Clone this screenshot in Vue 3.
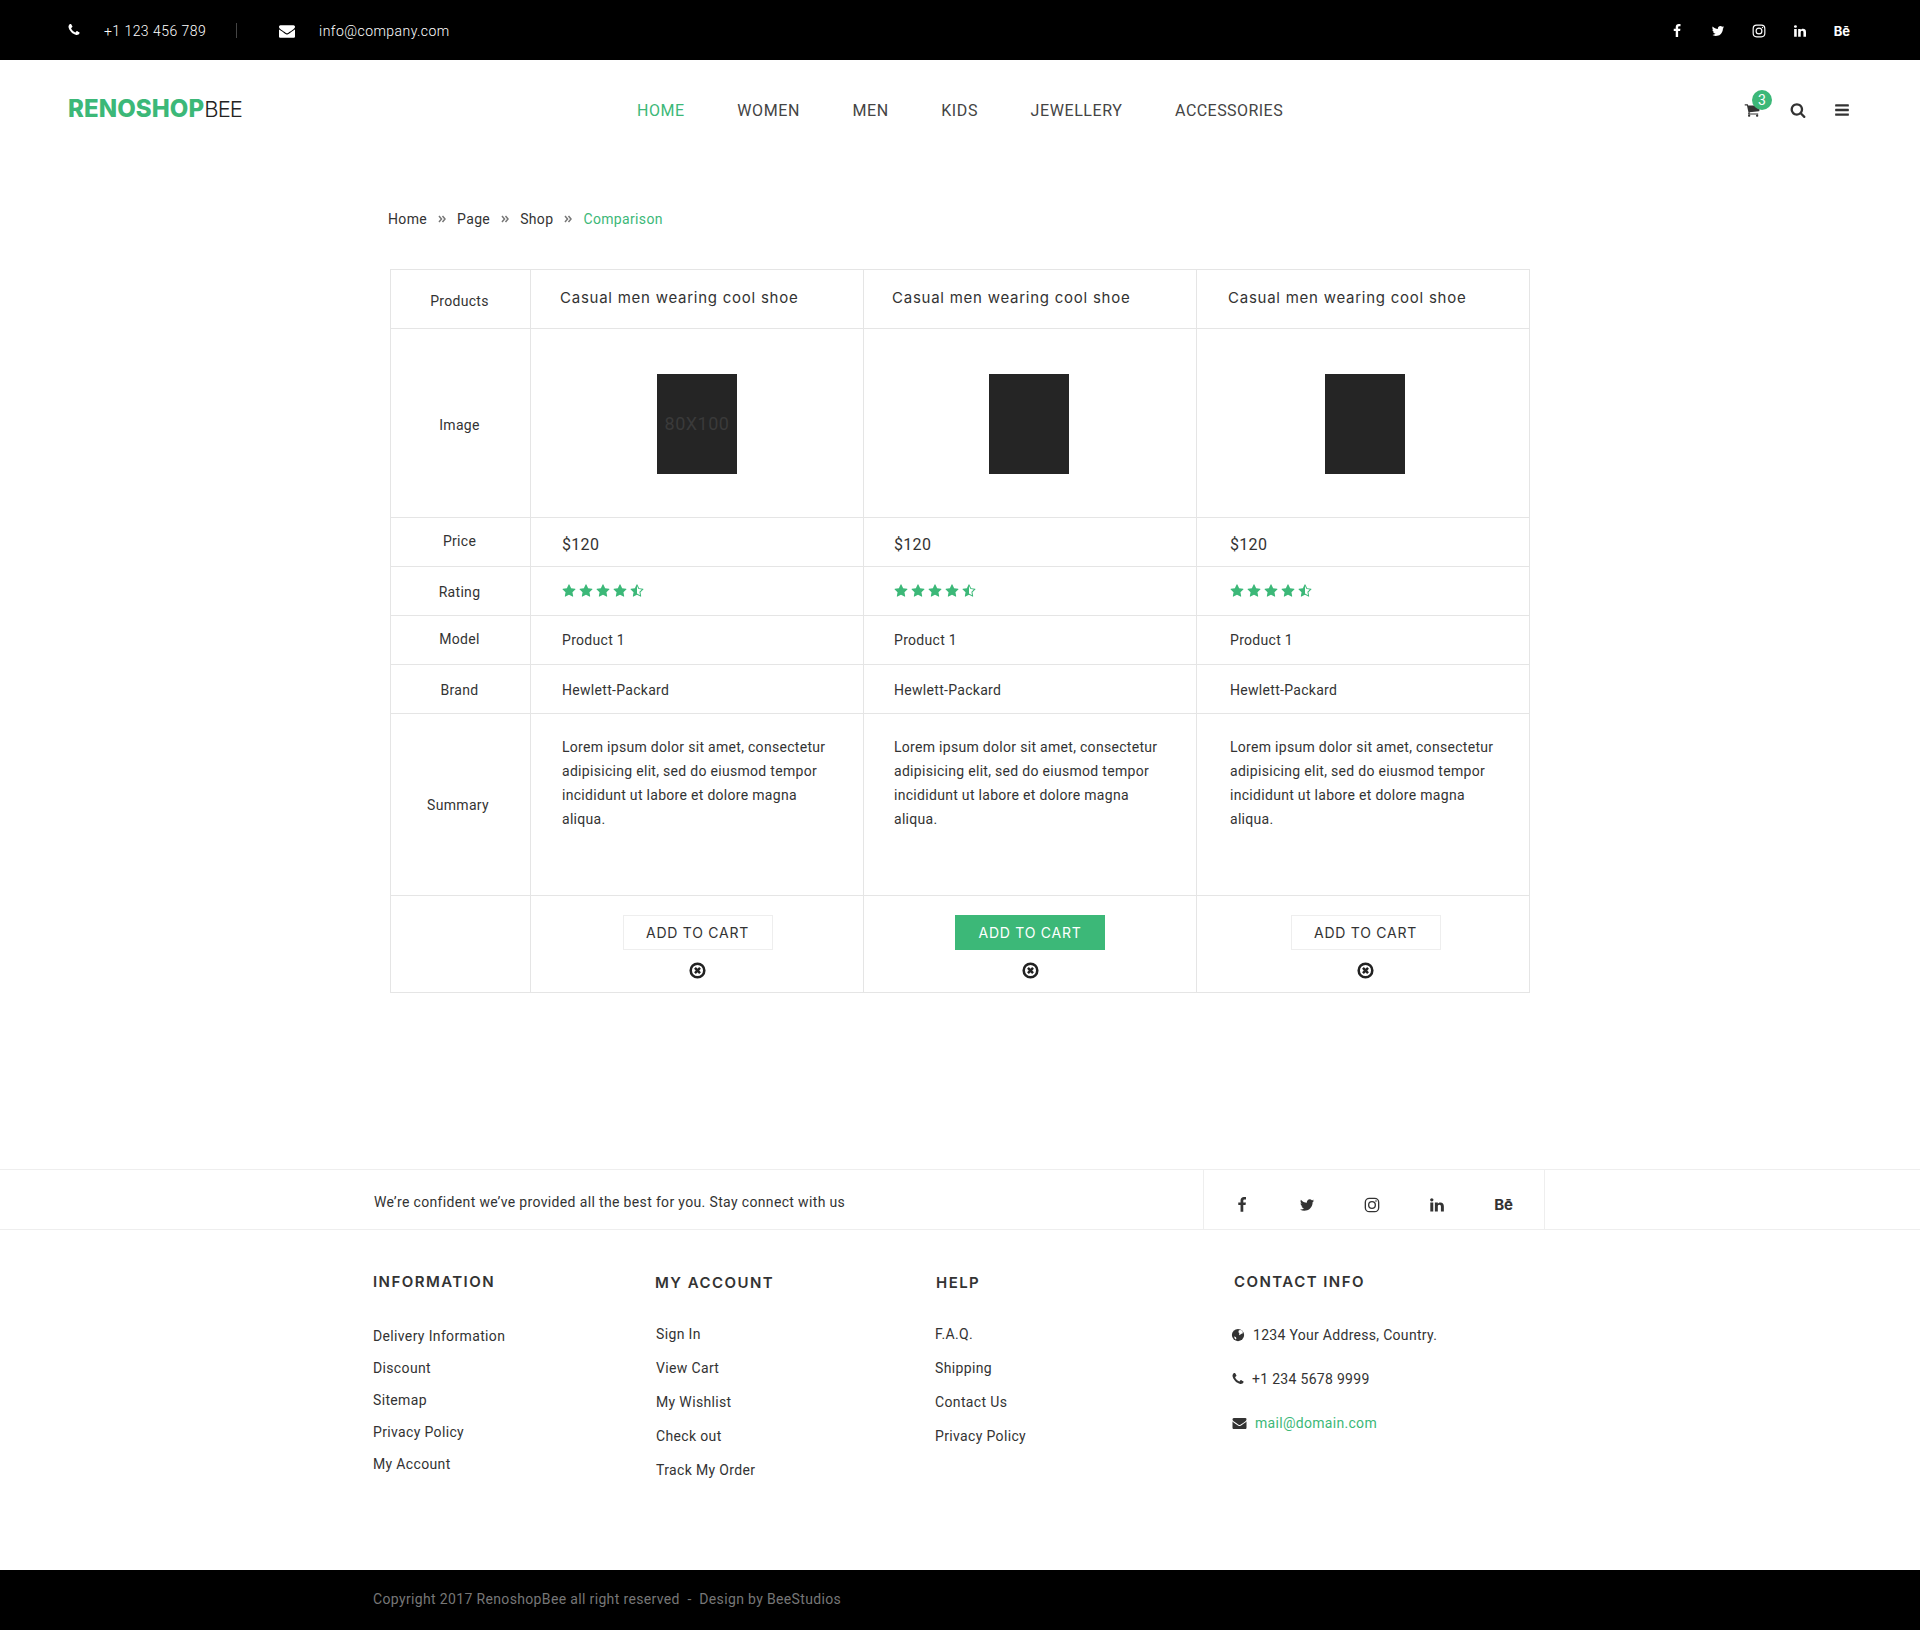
<template>
  <div class="page">
    <div class="topbar">
      <div class="top-left">
        <svg class="ic top-phone" viewBox="128 128 1536 1536"><path :d="icons.phone" /></svg>
        <span class="top-text">+1 123 456 789</span>
        <span class="top-sep"></span>
        <svg class="ic top-mail" viewBox="0 0 1792 1792"><path :d="icons.envelope" /></svg>
        <span class="top-text">info@company.com</span>
      </div>
      <div class="top-social">
        <svg class="ic" viewBox="0 0 1792 1792"><path :d="icons.facebook" /></svg>
        <svg class="ic" viewBox="0 0 1792 1792"><path :d="icons.twitter" /></svg>
        <svg class="ic insta" viewBox="0 0 24 24"><rect x="2" y="2" width="20" height="20" rx="6" /><circle cx="12" cy="12" r="5" /><circle class="dot" cx="18" cy="6" r="1.2" /></svg>
        <svg class="ic" viewBox="0 0 1792 1792"><path :d="icons.linkedin" /></svg>
        <span class="behance">Bē</span>
      </div>
    </div>

    <header class="nav">
      <div class="logo"><b>RENOSHOP</b><span>BEE</span></div>
      <nav class="menu">
        <a v-for="(m, i) in menu" :key="m" :class="{ active: i === 0 }">{{ m }}</a>
      </nav>
      <div class="nav-icons">
        <span class="cart">
          <svg class="ic" viewBox="0 0 1792 1792"><path :d="icons.cart" /></svg>
          <span class="badge">3</span>
        </span>
        <svg class="ic" viewBox="0 0 1792 1792"><path :d="icons.search" /></svg>
        <svg class="ic" viewBox="0 0 1792 1792"><path :d="icons.bars" /></svg>
      </div>
    </header>

    <div class="crumbs">
      <template v-for="(c, i) in crumbs" :key="c">
        <span :class="{ current: i === crumbs.length - 1 }">{{ c }}</span>
        <svg v-if="i < crumbs.length - 1" class="chev" viewBox="0 0 8 8"><path d="M1 1l2.5 3L1 7M4.5 1L7 4 4.5 7" /></svg>
      </template>
    </div>

    <table class="compare">
      <colgroup>
        <col class="c-label" /><col class="c-prod" /><col class="c-prod" /><col class="c-prod" />
      </colgroup>
      <tbody>
        <tr class="r-title">
          <th>Products</th>
          <td v-for="n in 3" :key="n"><h5>Casual men wearing cool shoe</h5></td>
        </tr>
        <tr class="r-image">
          <th>Image</th>
          <td v-for="n in 3" :key="n"><div class="thumb"><span v-if="n === 1">80X100</span></div></td>
        </tr>
        <tr class="r-small">
          <th class="up">Price</th>
          <td v-for="n in 3" :key="n"><span class="price">$120</span></td>
        </tr>
        <tr class="r-small">
          <th class="down">Rating</th>
          <td v-for="n in 3" :key="n">
            <div class="stars">
              <svg v-for="s in 4" :key="s" viewBox="0 0 1792 1792"><path :d="icons.star" /></svg>
              <svg viewBox="0 0 1792 1792"><path :d="icons.starHalf" /></svg>
            </div>
          </td>
        </tr>
        <tr class="r-small">
          <th class="up">Model</th>
          <td v-for="n in 3" :key="n">Product 1</td>
        </tr>
        <tr class="r-small r-brand">
          <th class="down">Brand</th>
          <td v-for="n in 3" :key="n">Hewlett-Packard</td>
        </tr>
        <tr class="r-summary">
          <th>Summary</th>
          <td v-for="n in 3" :key="n"><p>Lorem ipsum dolor sit amet, consectetur adipisicing elit, sed do eiusmod tempor incididunt ut labore et dolore magna aliqua.</p></td>
        </tr>
        <tr class="r-action">
          <th></th>
          <td v-for="n in 3" :key="n">
            <a class="btn" :class="{ filled: n === 2 }">ADD TO CART</a>
            <svg class="remove" viewBox="0 0 16 16"><circle cx="8" cy="8" r="6.4" /><path d="M5.6 5.6l4.8 4.8M10.4 5.6l-4.8 4.8" /></svg>
          </td>
        </tr>
      </tbody>
    </table>

    <div class="band">
      <div class="band-inner">
        <p>We’re confident we’ve provided all the best for you. Stay connect with us</p>
        <div class="band-social">
          <svg class="ic" viewBox="0 0 1792 1792"><path :d="icons.facebook" /></svg>
          <svg class="ic" viewBox="0 0 1792 1792"><path :d="icons.twitter" /></svg>
          <svg class="ic insta" viewBox="0 0 24 24"><rect x="2" y="2" width="20" height="20" rx="6" /><circle cx="12" cy="12" r="5" /><circle class="dot" cx="18" cy="6" r="1.2" /></svg>
          <svg class="ic" viewBox="0 0 1792 1792"><path :d="icons.linkedin" /></svg>
          <span class="behance">Bē</span>
        </div>
      </div>
    </div>

    <footer class="foot">
      <div class="foot-col info">
        <h4>INFORMATION</h4>
        <ul><li v-for="l in information" :key="l">{{ l }}</li></ul>
      </div>
      <div class="foot-col wide">
        <h4>MY ACCOUNT</h4>
        <ul class="account"><li v-for="l in account" :key="l">{{ l }}</li></ul>
      </div>
      <div class="foot-col wide">
        <h4>HELP</h4>
        <ul class="help"><li v-for="l in help" :key="l">{{ l }}</li></ul>
      </div>
      <div class="foot-col contact">
        <h4>CONTACT INFO</h4>
        <div class="contact-row">
          <svg class="globe" viewBox="0 0 16 16"><circle cx="8" cy="8" r="7" /><path class="land" d="M9 2.6l2.6-.4 2 2.2-.4 2-2 .4-1 1.6-1-1 .4-1.6-1.2-1zM3.4 9.6l2 .6.8 1.4-.6 1.6-1.2-.8z" /></svg>
          <span>1234 Your Address, Country.</span>
        </div>
        <div class="contact-row">
          <svg class="ic" viewBox="0 0 1792 1792"><path :d="icons.phone" /></svg>
          <span>+1 234 5678 9999</span>
        </div>
        <div class="contact-row">
          <svg class="ic mail" viewBox="0 0 1792 1792"><path :d="icons.envelope" /></svg>
          <span class="green">mail@domain.com</span>
        </div>
      </div>
    </footer>

    <div class="copyright">
      <p>Copyright 2017 RenoshopBee all right reserved &nbsp;-&nbsp; Design by BeeStudios</p>
    </div>
  </div>
</template>

<script setup>
const menu = ['HOME', 'WOMEN', 'MEN', 'KIDS', 'JEWELLERY', 'ACCESSORIES']
const crumbs = ['Home', 'Page', 'Shop', 'Comparison']
const information = ['Delivery Information', 'Discount', 'Sitemap', 'Privacy Policy', 'My Account']
const account = ['Sign In', 'View Cart', 'My Wishlist', 'Check out', 'Track My Order']
const help = ['F.A.Q.', 'Shipping', 'Contact Us', 'Privacy Policy']

const icons = {
  phone: 'M1600 1240q0 27-10 70.5t-21 68.5q-21 50-122 106-94 51-186 51-27 0-53-3.5t-57.5-12.5-47-14.5-55.5-20.5-49-18q-98-35-175-83-127-79-264-216t-216-264q-48-77-83-175-3-9-18-49t-20.5-55.5-14.5-47-12.5-57.5-3.5-53q0-92 51-186 56-101 106-122 25-11 68.5-21t70.5-10q14 0 21 3 18 6 53 76 11 19 30 54t35 63.5 31 53.5q3 4 17.5 25t21.5 35.5 7 28.5q0 20-28.5 50t-62 55-62 53-28.5 46q0 9 5 22.5t8.5 20.5 14 24 11.5 19q76 137 174 235t235 174q2 1 19 11.5t24 14 20.5 8.5 22.5 5q18 0 46-28.5t53-62 55-62 50-28.5q14 0 28.5 7t35.5 21.5 25 17.5q25 15 53.5 31t63.5 35 54 30q70 35 76 53 3 7 3 21z',
  envelope: 'M1792 710v794q0 66-47 113t-113 47h-1472q-66 0-113-47t-47-113v-794q44 49 101 87 362 246 497 345 57 42 92.5 65.5t94.5 48 110 24.5h2q51 0 110-24.5t94.5-48 92.5-65.5q170-123 498-345 57-39 100-87zm0-294q0 79-49 151t-122 123q-376 261-468 325-10 7-42.5 30.5t-54 38-52 32.5-57.5 27-50 9h-2q-23 0-50-9t-57.5-27-52-32.5-54-38-42.5-30.5q-91-64-262-182.5t-205-142.5q-62-42-117-115.5t-55-136.5q0-78 41.5-130t118.5-52h1472q65 0 112.5 47t47.5 113z',
  facebook: 'M1343 12v264h-157q-86 0-116 36t-30 108v189h293l-39 296h-254v759h-306v-759h-255v-296h255v-218q0-186 104-288.5t277-102.5q147 0 228 12z',
  twitter: 'M1684 408q-67 98-162 167 1 14 1 42 0 130-38 259.5t-115.5 248.5-184.5 210.5-258 146-323 54.5q-271 0-496-145 35 4 78 4 225 0 401-138-105-2-188-64.5t-114-159.5q33 5 61 5 43 0 85-11-112-23-185.5-111.5t-73.5-205.5v-4q68 38 146 41-66-44-105-115t-39-154q0-88 44-163 121 149 294.5 238.5t371.5 99.5q-8-38-8-74 0-134 94.5-228.5t228.5-94.5q140 0 236 102 109-21 200-76-35 109-138 170 94-10 188-52z',
  linkedin: 'M477 625v991h-330v-991h330zm21-306q1 73-50.5 122t-135.5 49h-2q-82 0-132-49t-50-122q0-74 51.5-122.5t134.5-48.5 133 48.5 51 122.5zm1166 729v568h-329v-530q0-105-40.5-164.5t-126.5-59.5q-63 0-105.5 34.5t-63.5 85.5q-11 30-11 81v553h-329q2-399 2-647t-1-296l-1-48h329v144h-2q20-32 41-56t56.5-52 87-43.5 114.5-15.5q171 0 275 113.5t104 332.5z',
  cart: 'M704 1536q0 52-38 90t-90 38-90-38-38-90 38-90 90-38 90 38 38 90zm896 0q0 52-38 90t-90 38-90-38-38-90 38-90 90-38 90 38 38 90zm128-1088v512q0 24-16.5 42.5t-40.5 21.5l-1044 122q13 60 13 70 0 16-24 64h920q26 0 45 19t19 45-19 45-45 19h-1024q-26 0-45-19t-19-45q0-11 8-31.5t16-36 21.5-40 15.5-29.5l-177-823h-204q-26 0-45-19t-19-45 19-45 45-19h256q16 0 28.5 6.5t19.5 15.5 13 24.5 8 26 5.5 29.5 4.5 26h1201q26 0 45 19t19 45z',
  search: 'M1216 832q0-185-131.5-316.5t-316.5-131.5-316.5 131.5-131.5 316.5 131.5 316.5 316.5 131.5 316.5-131.5 131.5-316.5zm512 832q0 52-38 90t-90 38q-54 0-90-38l-343-342q-179 124-399 124-143 0-273.5-55.5t-225-150-150-225-55.5-273.5 55.5-273.5 150-225 225-150 273.5-55.5 273.5 55.5 225 150 150 225 55.5 273.5q0 220-124 399l343 343q37 37 37 90z',
  bars: 'M1664 1344v128q0 26-19 45t-45 19h-1408q-26 0-45-19t-19-45v-128q0-26 19-45t45-19h1408q26 0 45 19t19 45zm0-512v128q0 26-19 45t-45 19h-1408q-26 0-45-19t-19-45v-128q0-26 19-45t45-19h1408q26 0 45 19t19 45zm0-512v128q0 26-19 45t-45 19h-1408q-26 0-45-19t-19-45v-128q0-26 19-45t45-19h1408q26 0 45 19t19 45z',
  star: 'M1728 647q0 22-26 48l-363 354 86 500q1 7 1 20 0 21-10.5 35.5t-30.5 14.5q-19 0-40-12l-449-236-449 236q-22 12-40 12-21 0-31.5-14.5t-10.5-35.5q0-6 2-20l86-500-364-354q-25-27-25-48 0-37 56-46l502-73 225-455q19-41 49-41t49 41l225 455 502 73q56 9 56 46z',
  starHalf: 'M1250 957l257-250-356-52-66-10-30-60-159-322v963l59 31 318 168-60-355-12-66zm452-262l-363 354 86 500q5 33-6 51.5t-34 18.5q-17 0-40-12l-449-236-449 236q-23 12-40 12-23 0-34-18.5t-6-51.5l86-500-364-354q-32-32-23-59.5t54-34.5l502-73 225-455q20-41 49-41 28 0 49 41l225 455 502 73q45 7 54 34.5t-24 59.5z'
}
</script>

<style>
html,
body {
  margin: 0;
  background: #fff;
}
</style>

<style scoped>
.page {
  width: 1920px;
  height: 1630px;
  font-family: Roboto, "Liberation Sans", sans-serif;
  color: #333;
  font-size: 14px;
  overflow: hidden;
}

.ic {
  fill: currentColor;
  width: 14px;
  height: 14px;
  display: block;
}

.insta {
  fill: none;
  stroke: currentColor;
  stroke-width: 2;
}

.insta .dot {
  fill: currentColor;
  stroke: none;
}

.behance {
  font-family: Inter, sans-serif;
  font-weight: 700;
  line-height: 14px;
}

/* top bar */
.topbar {
  height: 60px;
  background: #000;
  color: #fff;
  display: flex;
  align-items: center;
  justify-content: space-between;
  padding: 2px 70px 0 68px;
  box-sizing: border-box;
}

.top-left {
  display: flex;
  align-items: center;
}

.top-text {
  font-size: 14px;
  font-weight: 300;
  letter-spacing: 0.45px;
}

.top-phone {
  width: 12px;
  height: 12px;
  margin: -2px 24px 0 0;
}

.top-mail {
  width: 16px;
  height: 16px;
  margin: -1px 24px 0 0;
}

.top-sep {
  width: 1px;
  height: 15px;
  background: #444;
  margin: -2px 42px 0 30px;
}

.top-social {
  display: flex;
  align-items: center;
  gap: 27px;
}

.top-social .behance {
  font-size: 13px;
}

/* nav */
.nav {
  height: 100px;
  display: grid;
  grid-template-columns: 1fr auto 1fr;
  align-items: center;
  padding: 0 70px 0 68px;
}

.logo {
  font-family: Inter, sans-serif;
  font-size: 24px;
  color: #222;
  margin-top: -3px;
}

.logo b {
  color: #3cb878;
  font-weight: 800;
  letter-spacing: 0.1px;
}

.logo span {
  font-size: 22px;
  font-weight: 300;
  letter-spacing: -0.9px;
}

.menu {
  display: flex;
  gap: 52.5px;
  padding-left: 2px;
}

.menu a {
  font-size: 16px;
  color: #444;
  letter-spacing: 0.6px;
}

.menu a:last-child {
  letter-spacing: 0.45px;
}

.menu a.active {
  color: #3cb878;
}

.nav-icons {
  justify-self: end;
  display: flex;
  align-items: center;
  gap: 28px;
  color: #333;
}

.nav-icons .ic {
  width: 16px;
  height: 16px;
}

.cart {
  position: relative;
  margin-right: 2px;
}

.badge {
  position: absolute;
  top: -12px;
  left: 8px;
  width: 20px;
  height: 20px;
  border-radius: 50%;
  background: #3cb878;
  color: #fff;
  font-size: 14px;
  line-height: 20px;
  text-align: center;
}

/* breadcrumb */
.crumbs {
  display: flex;
  align-items: center;
  gap: 11px;
  margin: 50px 0 0 388px;
  height: 18px;
  font-size: 14px;
  letter-spacing: 0.35px;
}

.chev {
  width: 8px;
  height: 8px;
  fill: none;
  stroke: #777;
  stroke-width: 1.5;
}

.current {
  color: #3cb878;
}

/* table */
.compare {
  border-collapse: collapse;
  table-layout: fixed;
  width: 1139px;
  margin: 41px 0 0 390px;
  letter-spacing: 0.3px;
}

.c-label {
  width: 140px;
}

.c-prod {
  width: 333px;
}

.compare th,
.compare td {
  border: 1px solid #e5e5e5;
  padding: 0;
}

.compare th {
  font-weight: 400;
  text-align: center;
  color: #333;
  padding-right: 2px;
}

.compare td {
  padding-left: 31px;
  color: #333;
}

.compare td:nth-child(3) {
  padding-left: 30px;
}

.compare td:nth-child(4) {
  padding-left: 33px;
}

.compare th.up {
  padding-bottom: 3px;
}

.compare th.down {
  padding-top: 2px;
}

.r-title {
  height: 59px;
}

.compare .r-title th {
  padding-top: 3px;
}

.compare .r-title td {
  padding-bottom: 4px;
}

.r-title h5 {
  margin: 0 0 0 -2px;
  font-family: Inter, sans-serif;
  font-weight: 400;
  font-size: 15px;
  letter-spacing: 0.75px;
  color: #333;
}

.r-image {
  height: 189px;
}

.compare .r-image th {
  padding-top: 4px;
}

.compare .r-image td {
  padding: 1px 0 0;
  vertical-align: middle;
}

.compare .r-image td:nth-child(3) {
  padding-right: 2px;
}

.compare .r-image td:nth-child(4) {
  padding-left: 3px;
}

.compare .r-action td:nth-child(4) {
  padding-left: 5px;
}

.thumb {
  width: 80px;
  height: 100px;
  margin: 0 auto;
  background: #252525;
  color: #3a3a3a;
  font-size: 18px;
  letter-spacing: 0.5px;
  display: flex;
  align-items: center;
  justify-content: center;
}

.r-small {
  height: 49px;
}

.price {
  font-size: 16px;
  position: relative;
  top: 2px;
}

.r-brand td {
  padding-top: 2px;
}

.stars {
  display: flex;
  gap: 3px;
}

.stars svg {
  width: 14px;
  height: 14px;
  fill: #3cb878;
}

.r-summary {
  height: 182px;
}

.compare .r-summary th {
  padding-right: 5px;
}

.compare .r-summary td {
  vertical-align: top;
  padding: 21px 30px 0 31px;
}

.compare .r-summary td:nth-child(3) {
  padding-left: 30px;
}

.compare .r-summary td:nth-child(4) {
  padding-left: 33px;
}

.r-summary p {
  margin: 0;
  line-height: 24px;
}

.r-action {
  height: 97px;
}

.compare .r-action td {
  padding: 6px 0 0;
  text-align: center;
}

.compare .r-action td:nth-child(2) {
  padding-left: 1px;
}

.btn {
  display: block;
  box-sizing: border-box;
  width: 150px;
  height: 35px;
  margin: 0 auto;
  border: 1px solid #eee;
  font-family: Inter, sans-serif;
  font-size: 14px;
  letter-spacing: 0.75px;
  line-height: 33px;
  color: #333;
}

.btn.filled {
  background: #3cb878;
  border-color: #3cb878;
  color: #fff;
}

.remove {
  display: block;
  width: 17px;
  height: 17px;
  margin: 12px auto 0;
  fill: none;
  stroke: #222;
  stroke-width: 2.4;
}

/* band */
.band {
  margin-top: 176px;
  height: 61px;
  box-sizing: border-box;
  border-top: 1px solid #eee;
  border-bottom: 1px solid #eee;
}

.band-inner {
  height: 100%;
  padding-left: 374px;
  width: 1545px;
  box-sizing: border-box;
  display: flex;
  align-items: center;
  justify-content: space-between;
}

.band-inner p {
  margin: 4px 0 0;
  font-size: 14px;
  letter-spacing: 0.35px;
}

.band-social {
  width: 342px;
  height: 100%;
  box-sizing: border-box;
  border-left: 1px solid #eee;
  border-right: 1px solid #eee;
  display: flex;
  align-items: center;
  justify-content: space-between;
  padding: 11px 31px 0 30px;
  color: #333;
}

.band-social .ic {
  width: 16px;
  height: 16px;
}

.band-social .behance {
  font-size: 15px;
}

/* footer */
.foot {
  height: 340px;
  display: grid;
  grid-template-columns: 282px 281px 298px 1fr;
  padding: 41px 0 0 373px;
  box-sizing: border-box;
}

.foot-col h4 {
  margin: 0;
  font-family: Inter, sans-serif;
  font-size: 15px;
  font-weight: 600;
  letter-spacing: 1.45px;
  line-height: 22px;
  color: #333;
}

.foot-col ul {
  list-style: none;
  margin: 0;
  padding: 0;
}

.foot-col li {
  line-height: 18px;
  letter-spacing: 0.35px;
}

.info ul {
  margin-top: 34px;
}

.info li + li {
  margin-top: 14px;
}

.wide {
  padding-top: 1px;
}

.wide ul {
  margin-top: 31px;
}

.wide li + li {
  margin-top: 16px;
}

.wide ul.account {
  margin-left: 1px;
}

.wide ul.help {
  margin-left: -1px;
}

.contact-row {
  display: flex;
  align-items: center;
  gap: 7px;
  height: 18px;
  letter-spacing: 0.3px;
  margin-top: 26px;
}

.foot-col h4 + .contact-row {
  margin-top: 33px;
}

.contact .ic {
  width: 14px;
  height: 14px;
  margin-left: -3px;
}

.contact .mail {
  width: 15px;
  margin-left: -2px;
  margin-right: 1px;
}

.globe {
  width: 14px;
  height: 14px;
  margin-left: -3px;
  margin-right: 1px;
  fill: #333;
}

.globe .land {
  fill: #fff;
}

.green {
  color: #3cb878;
}

/* copyright */
.copyright {
  height: 60px;
  background: #000;
  display: flex;
  align-items: center;
  padding: 0 0 2px 373px;
  box-sizing: border-box;
  color: #777;
  letter-spacing: 0.35px;
}

.copyright p {
  margin: 0;
}
</style>
